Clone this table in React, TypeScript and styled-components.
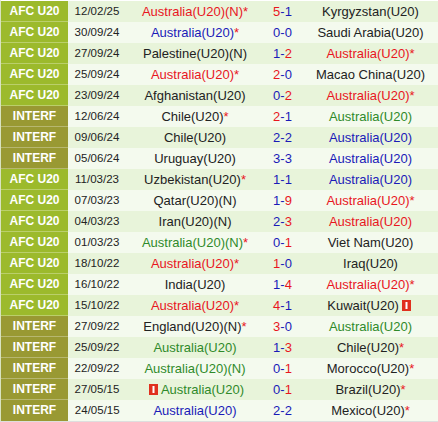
import styled, { createGlobalStyle } from "styled-components"

const GlobalStyle = createGlobalStyle`
  html, body {
    margin: 0;
    padding: 0;
    background: #ffffff;
  }
  body {
    font-family: "Liberation Sans", Arial, sans-serif;
  }
`

const Wrap = styled.div`
  width: 438px;
  border-bottom: 2px solid #dedede;
`

const Table = styled.table`
  width: 438px;
  border-collapse: collapse;
  table-layout: fixed;
`

const Row = styled.tr<{ $alt: boolean }>`
  height: 21px;
  background: ${(p) => (p.$alt ? "#f4faee" : "#e8f4da")};
`

const League = styled.td<{ $kind: string }>`
  width: 67px;
  padding: 0;
  text-align: center;
  color: #ffffff;
  font-weight: bold;
  font-size: 12px;
  background: ${(p) => (p.$kind === "INTERF" ? "#999933" : "#9cba2c")};
  border-top: 1px solid rgba(255, 255, 255, 0.3);
  border-left: 1px solid #d8e2c0;
`

const DateCell = styled.td`
  width: 58px;
  padding: 0;
  text-align: center;
  font-size: 11.5px;
  color: #222222;
`

const TeamCell = styled.td<{ $w: number }>`
  width: ${(p) => p.$w}px;
  padding: 0;
  text-align: center;
  font-size: 13px;
  white-space: nowrap;
`

const ScoreCell = styled.td`
  width: 38px;
  padding: 0;
  text-align: center;
  font-size: 13px;
  color: #1a1ab8;
`

const Name = styled.span<{ $tone: string }>`
  color: ${(p) =>
    p.$tone === "red"
      ? "#e8161e"
      : p.$tone === "blue"
        ? "#1a1ab8"
        : p.$tone === "green"
          ? "#2f8a2a"
          : "#222222"};
`

const Star = styled.span`
  color: #e8161e;
`

const Win = styled.span`
  color: #e8161e;
`

const Card = styled.svg`
  vertical-align: -1px;
  margin: 0 3px;
`

type Team = { name: string; tone?: string; star?: boolean; card?: "before" | "after" }

type Match = {
  league: string
  date: string
  home: Team
  score: [number, number]
  away: Team
}

const matches: Match[] = [
  { league: "AFC U20", date: "12/02/25", home: { name: "Australia(U20)(N)", tone: "red", star: true }, score: [5, 1], away: { name: "Kyrgyzstan(U20)" } },
  { league: "AFC U20", date: "30/09/24", home: { name: "Australia(U20)", tone: "blue", star: true }, score: [0, 0], away: { name: "Saudi Arabia(U20)" } },
  { league: "AFC U20", date: "27/09/24", home: { name: "Palestine(U20)(N)" }, score: [1, 2], away: { name: "Australia(U20)", tone: "red", star: true } },
  { league: "AFC U20", date: "25/09/24", home: { name: "Australia(U20)", tone: "red", star: true }, score: [2, 0], away: { name: "Macao China(U20)" } },
  { league: "AFC U20", date: "23/09/24", home: { name: "Afghanistan(U20)" }, score: [0, 2], away: { name: "Australia(U20)", tone: "red", star: true } },
  { league: "INTERF", date: "12/06/24", home: { name: "Chile(U20)", star: true }, score: [2, 1], away: { name: "Australia(U20)", tone: "green" } },
  { league: "INTERF", date: "09/06/24", home: { name: "Chile(U20)" }, score: [2, 2], away: { name: "Australia(U20)", tone: "blue" } },
  { league: "INTERF", date: "05/06/24", home: { name: "Uruguay(U20)" }, score: [3, 3], away: { name: "Australia(U20)", tone: "blue" } },
  { league: "AFC U20", date: "11/03/23", home: { name: "Uzbekistan(U20)", star: true }, score: [1, 1], away: { name: "Australia(U20)", tone: "blue" } },
  { league: "AFC U20", date: "07/03/23", home: { name: "Qatar(U20)(N)" }, score: [1, 9], away: { name: "Australia(U20)", tone: "red", star: true } },
  { league: "AFC U20", date: "04/03/23", home: { name: "Iran(U20)(N)" }, score: [2, 3], away: { name: "Australia(U20)", tone: "red" } },
  { league: "AFC U20", date: "01/03/23", home: { name: "Australia(U20)(N)", tone: "green", star: true }, score: [0, 1], away: { name: "Viet Nam(U20)" } },
  { league: "AFC U20", date: "18/10/22", home: { name: "Australia(U20)", tone: "red", star: true }, score: [1, 0], away: { name: "Iraq(U20)" } },
  { league: "AFC U20", date: "16/10/22", home: { name: "India(U20)" }, score: [1, 4], away: { name: "Australia(U20)", tone: "red", star: true } },
  { league: "AFC U20", date: "15/10/22", home: { name: "Australia(U20)", tone: "red", star: true }, score: [4, 1], away: { name: "Kuwait(U20)", card: "after" } },
  { league: "INTERF", date: "27/09/22", home: { name: "England(U20)(N)", star: true }, score: [3, 0], away: { name: "Australia(U20)", tone: "green" } },
  { league: "INTERF", date: "25/09/22", home: { name: "Australia(U20)", tone: "green" }, score: [1, 3], away: { name: "Chile(U20)", star: true } },
  { league: "INTERF", date: "22/09/22", home: { name: "Australia(U20)(N)", tone: "green" }, score: [0, 1], away: { name: "Morocco(U20)", star: true } },
  { league: "INTERF", date: "27/05/15", home: { name: "Australia(U20)", tone: "green", card: "before" }, score: [0, 1], away: { name: "Brazil(U20)", star: true } },
  { league: "INTERF", date: "24/05/15", home: { name: "Australia(U20)", tone: "blue" }, score: [2, 2], away: { name: "Mexico(U20)", star: true } },
]

function RedCard() {
  return (
    <Card width="9" height="11" viewBox="0 0 9 11">
      <rect x="0" y="0" width="9" height="11" fill="#e0301e" />
      <rect x="3.5" y="2" width="2" height="7" fill="#ffffff" />
    </Card>
  )
}

function TeamLabel({ team }: { team: Team }) {
  return (
    <>
      {team.card === "before" && <RedCard />}
      <Name $tone={team.tone ?? "black"}>{team.name}</Name>
      {team.star && <Star>*</Star>}
      {team.card === "after" && <RedCard />}
    </>
  )
}

function Goal({ value, won }: { value: number; won: boolean }) {
  return won ? <Win>{value}</Win> : <>{value}</>
}

export default function App() {
  return (
    <>
      <GlobalStyle />
      <Wrap>
        <Table>
          <tbody>
            {matches.map((m, i) => {
              const [h, a] = m.score
              return (
                <Row key={i} $alt={i % 2 === 1}>
                  <League $kind={m.league}>{m.league}</League>
                  <DateCell>{m.date}</DateCell>
                  <TeamCell $w={137}>
                    <TeamLabel team={m.home} />
                  </TeamCell>
                  <ScoreCell>
                    <Goal value={h} won={h > a} />-<Goal value={a} won={a > h} />
                  </ScoreCell>
                  <TeamCell $w={138}>
                    <TeamLabel team={m.away} />
                  </TeamCell>
                </Row>
              )
            })}
          </tbody>
        </Table>
      </Wrap>
    </>
  )
}
